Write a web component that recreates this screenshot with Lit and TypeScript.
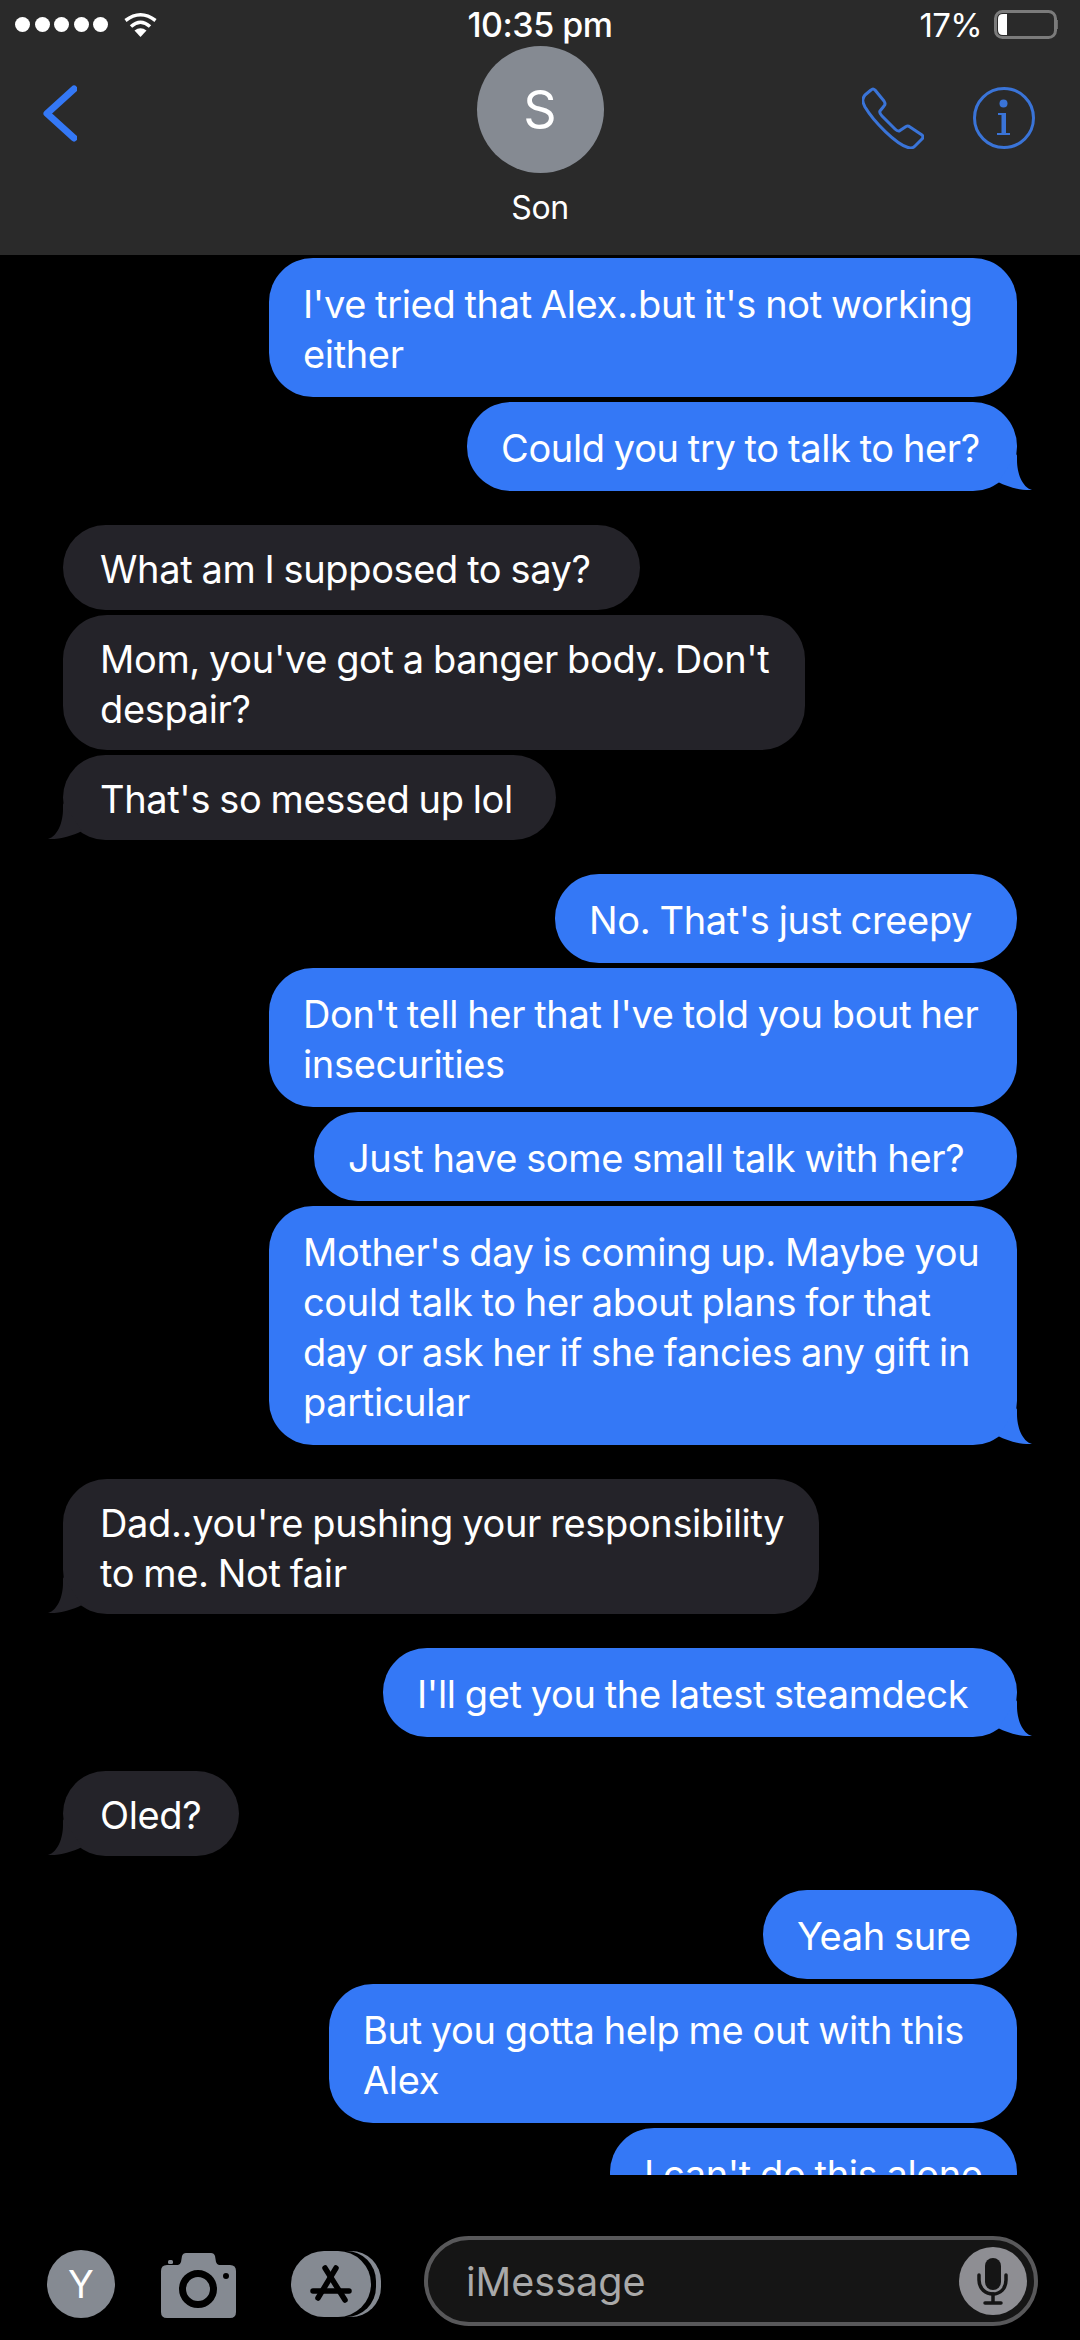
import { LitElement, html, css, svg } from "lit";
import { customElement } from "lit/decorators.js";

type Msg = { me: boolean; edge: number; lines: string[]; far?: boolean; tail?: boolean };

const messages: Msg[] = [
  { me: true, edge: 269, lines: ["I've tried that Alex..but it's not working", "either"] },
  { me: true, edge: 467, lines: ["Could you try to talk to her?"], tail: true },
  { me: false, edge: 640, lines: ["What am I supposed to say?"], far: true },
  { me: false, edge: 805, lines: ["Mom, you've got a banger body. Don't", "despair?"] },
  { me: false, edge: 556, lines: ["That's so messed up lol"], tail: true },
  { me: true, edge: 555, lines: ["No. That's just creepy"], far: true },
  { me: true, edge: 269, lines: ["Don't tell her that I've told you bout her", "insecurities"] },
  { me: true, edge: 314, lines: ["Just have some small talk with her?"] },
  { me: true, edge: 269, lines: ["Mother's day is coming up. Maybe you", "could talk to her about plans for that", "day or ask her if she fancies any gift in", "particular"], tail: true },
  { me: false, edge: 819, lines: ["Dad..you're pushing your responsibility", "to me. Not fair"], far: true, tail: true },
  { me: true, edge: 383, lines: ["I'll get you the latest steamdeck"], far: true, tail: true },
  { me: false, edge: 239, lines: ["Oled?"], far: true, tail: true },
  { me: true, edge: 763, lines: ["Yeah sure"], far: true },
  { me: true, edge: 329, lines: ["But you gotta help me out with this", "Alex"] },
  { me: true, edge: 610, lines: ["I can't do this alone"] },
];

const tailPath = svg`<path d="M25 0 L25 6 C25 19 30 33 40 36 C28 36.500 16 33 6 28 Z" />`;

@customElement("app-root")
export class AppRoot extends LitElement {
  static styles = css`
    :host {
      display: block;
      width: 1080px;
      height: 2340px;
      overflow: hidden;
      background: #000;
      color: #fff;
      font-family: Inter, "Liberation Sans", sans-serif;
    }
    .page { display: flex; flex-direction: column; height: 2340px; }
    header { height: 255px; flex: none; background: #2a2a2a; display: flex; flex-direction: column; }

    .status {
      height: 46px;
      padding: 3px 15px 0 15px;
      box-sizing: border-box;
      display: grid;
      grid-template-columns: 1fr auto 1fr;
      align-items: center;
      font-size: 33px;
      letter-spacing: -0.7px;
    }
    .time { font-size: 34px; letter-spacing: -0.5px; font-weight: 500; }
    .left { display: flex; align-items: center; }
    .dots { display: flex; gap: 4.500px; margin-right: 16px; }
    .dot { width: 15px; height: 15px; border-radius: 50%; background: #fff; }
    .wifi { width: 33px; height: 25px; display: block; }
    .right { display: flex; justify-content: flex-end; align-items: center; gap: 12px; padding-right: 7px; }
    .battery { width: 64px; height: 29px; display: block; }

    .nav { display: grid; grid-template-columns: 1fr auto 1fr; flex: 1; }
    .back { width: 34px; height: 57px; margin: 39px 0 0 43px; display: block; }
    .contact { display: flex; flex-direction: column; align-items: center; }
    .avatar {
      width: 127px;
      height: 127px;
      border-radius: 50%;
      background: #858a92;
      display: flex;
      align-items: center;
      justify-content: center;
      font-size: 52px;
    }
    .name { font-size: 32px; line-height: 38px; margin-top: 16px; letter-spacing: -0.4px; }
    .actions { display: flex; justify-content: flex-end; gap: 49px; padding: 41px 45px 0 0; }
    .actions svg { width: 62px; height: 62px; display: block; }

    .thread {
      height: 1920px;
      flex: none;
      overflow: hidden;
      padding-top: 3px;
      box-sizing: border-box;
      display: flex;
      flex-direction: column;
    }
    .bubble {
      position: relative;
      flex: none;
      box-sizing: border-box;
      border-radius: 44px;
      font-size: 38px;
      letter-spacing: -0.35px;
      word-spacing: -1.200px;
      line-height: 50px;
      white-space: nowrap;
      margin-top: 5px;
    }
    .bubble:first-child { margin-top: 0; }
    .bubble.far { margin-top: 34px; }
    .me { align-self: flex-end; margin-right: 63px; background: #3478f6; padding: 20.500px 0 18.500px 34px; }
    .them { align-self: flex-start; margin-left: 63px; background: #242329; padding: 18.500px 0 16.500px 37px; }
    .tail { position: absolute; bottom: 0; width: 40px; height: 37px; display: block; }
    .me .tail { right: -15px; fill: #3478f6; }
    .them .tail { left: -15px; fill: #242329; transform: scaleX(-1); }

    .composer { flex: 1; padding: 61px 42px 0 47px; display: flex; align-items: flex-start; }
    .avatar-y {
      width: 68px;
      height: 68px;
      margin-top: 14px;
      border-radius: 50%;
      background: #858a92;
      display: flex;
      align-items: center;
      justify-content: center;
      font-size: 38px;
    }
    .camera { width: 75px; height: 65px; margin: 17px 0 0 46px; display: block; }
    .apps { width: 90px; height: 66px; margin: 15px 0 0 55px; display: block; }
    .input {
      margin-left: 43px;
      flex: 1;
      height: 90px;
      box-sizing: border-box;
      background: #151515;
      border: 4px solid #58585a;
      border-radius: 45px;
      padding: 0 7px 0 38px;
      display: flex;
      align-items: center;
      justify-content: space-between;
      font-size: 39.500px;
      color: #a9a9a9;
    }
    .input span { padding-top: 2px; }
    .mic { width: 68px; height: 68px; display: block; }
  `;

  render() {
    return html`
      <div class="page">
        <header>
          <div class="status">
            <div class="left">
              <div class="dots">${[0, 1, 2, 3, 4].map(() => html`<span class="dot"></span>`)}</div>
              <svg class="wifi" viewBox="0 0 33 25" fill="none" stroke="#fff">
                <path d="M1.500 8.500 Q16.500 -3 31.500 8.500" stroke-width="3.500" />
                <path d="M7 14.500 Q16.500 6 26 14.500" stroke-width="3.500" />
                <path d="M10.500 18.500 Q16.500 14 22.500 18.500 L16.500 25 Z" fill="#fff" stroke="none" />
              </svg>
            </div>
            <div class="time">10:35 pm</div>
            <div class="right">
              <span>17%</span>
              <svg class="battery" viewBox="0 0 64 29" fill="none">
                <rect x="1.500" y="1.500" width="60" height="26" rx="7" stroke="#7b7b7b" stroke-width="3" />
                <path d="M4 9 Q4 4 9 4 H13 V25 H9 Q4 25 4 20 Z" fill="#fff" />
                <rect x="63" y="10" width="1" height="9" fill="#6b6b6b" />
              </svg>
            </div>
          </div>
          <div class="nav">
            <svg class="back" viewBox="0 0 34 57" fill="none" stroke="#3478f6" stroke-width="7" stroke-linecap="round" stroke-linejoin="round">
              <path d="M31 4 L4 28.500 L31 53" />
            </svg>
            <div class="contact">
              <div class="avatar">S</div>
              <div class="name">Son</div>
            </div>
            <div class="actions">
              <svg viewBox="0 0 62 62" fill="none" stroke="#3a74d8" stroke-width="3" stroke-linejoin="round">
                <path d="M9 3 Q11 1 13 3 L22 14 Q24 17 22 19 L18 24 Q17 26 20 29 L33 42 Q36 45 38 43.500 L44 39.500 Q46 38.500 48 40 L60 48 Q62 50 60 52 L53 59 Q50 62 46 60.500 C34 57 12 35 3 20 C0 14 0 12 3 8 Z" />
              </svg>
              <svg viewBox="0 0 62 62" fill="none" stroke="#3a74d8">
                <circle cx="31" cy="31" r="29.500" stroke-width="3" />
                <circle cx="30.500" cy="16.500" r="4" fill="#3a74d8" stroke="none" />
                <path d="M25 26 H33 V46 H37 V48 H24 V46 H28.500 V28 H25 Z" fill="#3a74d8" stroke="none" />
              </svg>
            </div>
          </div>
        </header>

        <main class="thread">
          ${messages.map(
            (m) => html`
              <div
                class="bubble ${m.me ? "me" : "them"} ${m.far ? "far" : ""}"
                style="width:${m.me ? 1017 - m.edge : m.edge - 63}px"
              >
                ${m.lines.map((l, i) => html`${i ? html`<br />` : ""}${l}`)}
                ${m.tail ? html`<svg class="tail" viewBox="0 0 40 37">${tailPath}</svg>` : ""}
              </div>
            `
          )}
        </main>

        <footer class="composer">
          <div class="avatar-y">Y</div>
          <svg class="camera" viewBox="0 0 75 65">
            <rect x="7" y="7" width="5" height="4" rx="1.500" fill="#858a92" />
            <path d="M0 18 Q0 12 6 12 H17 Q19 12 20 9 L21 3 Q22 0 25 0 H50 Q53 0 54 3 L55 9 Q56 12 58 12 H69 Q75 12 75 18 V59 Q75 65 69 65 H6 Q0 65 0 59 Z" fill="#858a92" />
            <circle cx="37" cy="36" r="15.500" fill="none" stroke="#000" stroke-width="7" />
            <circle cx="65" cy="23" r="3" fill="#000" />
          </svg>
          <svg class="apps" viewBox="0 0 90 66" fill="none">
            <rect x="30" y="0" width="60" height="66" rx="30" fill="#858a92" />
            <rect x="24" y="0" width="61" height="66" rx="30" fill="#000" />
            <rect x="0" y="0" width="80" height="66" rx="33" fill="#858a92" />
            <g stroke="#000" stroke-width="5.500" stroke-linecap="round">
              <path d="M34 17 L54 49" />
              <path d="M45 17 L27 47" />
              <path d="M22 40 H58" />
            </g>
          </svg>
          <div class="input">
            <span>iMessage</span>
            <svg class="mic" viewBox="0 0 68 68" fill="none">
              <circle cx="34" cy="34" r="34" fill="#8e8e93" />
              <rect x="26" y="11" width="16" height="32" rx="8" fill="#151515" />
              <g stroke="#151515" stroke-width="3.500" stroke-linecap="round">
                <path d="M20 28 V33 C20 42 27 47 34 47 C41 47 47 42 47 33 V28" />
                <path d="M34 47 V55" />
                <path d="M26 56 H42" />
              </g>
            </svg>
          </div>
        </footer>
      </div>
    `;
  }
}
